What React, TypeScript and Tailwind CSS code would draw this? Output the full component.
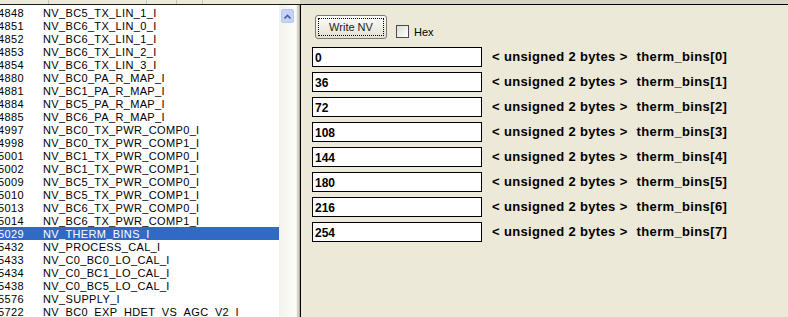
import React from 'react';

const rows: [string, string][] = [
  ['4848', 'NV_BC5_TX_LIN_1_I'],
  ['4851', 'NV_BC6_TX_LIN_0_I'],
  ['4852', 'NV_BC6_TX_LIN_1_I'],
  ['4853', 'NV_BC6_TX_LIN_2_I'],
  ['4854', 'NV_BC6_TX_LIN_3_I'],
  ['4880', 'NV_BC0_PA_R_MAP_I'],
  ['4881', 'NV_BC1_PA_R_MAP_I'],
  ['4884', 'NV_BC5_PA_R_MAP_I'],
  ['4885', 'NV_BC6_PA_R_MAP_I'],
  ['4997', 'NV_BC0_TX_PWR_COMP0_I'],
  ['4998', 'NV_BC0_TX_PWR_COMP1_I'],
  ['5001', 'NV_BC1_TX_PWR_COMP0_I'],
  ['5002', 'NV_BC1_TX_PWR_COMP1_I'],
  ['5009', 'NV_BC5_TX_PWR_COMP0_I'],
  ['5010', 'NV_BC5_TX_PWR_COMP1_I'],
  ['5013', 'NV_BC6_TX_PWR_COMP0_I'],
  ['5014', 'NV_BC6_TX_PWR_COMP1_I'],
  ['5029', 'NV_THERM_BINS_I'],
  ['5432', 'NV_PROCESS_CAL_I'],
  ['5433', 'NV_C0_BC0_LO_CAL_I'],
  ['5434', 'NV_C0_BC1_LO_CAL_I'],
  ['5438', 'NV_C0_BC5_LO_CAL_I'],
  ['5576', 'NV_SUPPLY_I'],
  ['5722', 'NV_BC0_EXP_HDET_VS_AGC_V2_I'],
];

const values = ['0', '36', '72', '108', '144', '180', '216', '254'];

const App: React.FC = () => {
  return (
    <div className="flex w-[788px] h-[317px] overflow-hidden bg-[#ece9d8] font-['Liberation_Sans',Arial,sans-serif]">
      {/* NV item list */}
      <div className="w-[300px] flex flex-col">
        <div className="h-[4px] flex bg-[#ebeadb] border-b border-[#1a1a1a] box-content">
          <div className="w-[49px] border-r border-[#c7c5b2]" />
          <div className="w-[98px] border-r border-[#c7c5b2]" />
          <div className="w-[30px] border-r border-[#c7c5b2]" />
          <div className="w-[26px] border-r border-[#c7c5b2]" />
          <div className="flex-1" />
        </div>
        <div className="flex flex-1 min-h-0">
          <div className="w-[279px] bg-white overflow-hidden pt-[1px] text-[11px] leading-[13px] tracking-[0.35px] text-black">
            {rows.map(([id, name]) => {
              const sel = id === '5029';
              return (
                <div
                  key={id}
                  className={`flex h-[13px] pt-[1px] whitespace-nowrap ${sel ? 'bg-[#316ac5] text-white' : ''}`}
                >
                  <span className="w-[45px] ml-[-2px] shrink-0">{id}</span>
                  <span>{name}</span>
                </div>
              );
            })}
          </div>
          <div className="w-[17px] bg-gradient-to-r from-[#f3f1ea] to-[#fdfdfb] pt-[4px] pl-[2px]">
            <div className="w-[13px] h-[14px] rounded-[2px] bg-[#c3d3fd] border border-[#b7c8f0] flex items-center justify-center">
              <svg width="7" height="5" viewBox="0 0 7 5">
                <path d="M0.5 4.5 L3.5 1.5 L6.5 4.5" stroke="#4d6185" strokeWidth="1.6" fill="none" />
              </svg>
            </div>
          </div>
          <div className="w-[4px] flex">
            <div className="w-[1px] bg-[#f6f5ef]" />
            <div className="w-[2px] bg-[#d6d2c2]" />
            <div className="w-[1px] bg-[#aca899]" />
          </div>
        </div>
      </div>

      {/* Editor panel */}
      <div className="flex-1 flex flex-col">
        <div className="h-[4px] bg-[#d8d4c6] border-b border-black box-content" />
        <div className="flex-1 border-l border-black pl-[11px] pt-[10px]">
          <div className="flex items-end gap-[9px] ml-[3px]">
            <button className="w-[72px] h-[24px] rounded-[3px] border border-[#7a7a6e] bg-gradient-to-b from-[#fdfdfb] to-[#e3e0d2] p-[2px]">
              <div className="w-full h-full border border-dotted border-black flex items-center justify-center text-[11px] text-[#222]">
                Write NV
              </div>
            </button>
            <label className="flex items-center gap-[5px] text-[11px] text-black mb-[-1px]">
              <span className="w-[13px] h-[13px] border border-[#4a4a4a] bg-gradient-to-br from-[#dcdcd6] to-white" />
              Hex
            </label>
          </div>
          <div className="flex flex-col gap-[5px] mt-[8px]">
            {values.map((v, i) => (
              <div key={i} className="flex items-center">
                <div className="w-[170px] h-[20px] border border-black bg-white px-[2px] pt-[2px] flex items-center text-[12px] font-bold text-black">
                  {v}
                </div>
                <div className="ml-[10px] text-[13px] font-bold tracking-[0.35px] text-black whitespace-nowrap">
                  &lt; unsigned 2 bytes &gt;<span className="ml-[9px]">therm_bins[{i}]</span>
                </div>
              </div>
            ))}
          </div>
        </div>
      </div>
    </div>
  );
};

export default App;
